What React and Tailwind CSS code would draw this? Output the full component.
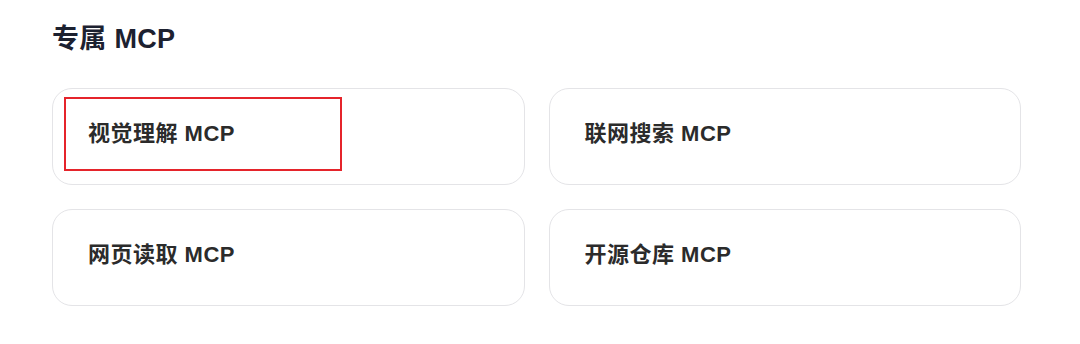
import React from 'react'

const items = ['视觉理解 MCP', '联网搜索 MCP', '网页读取 MCP', '开源仓库 MCP']

export default function App() {
  return (
    <div
      className="w-[1080px] h-[344px] bg-white pl-[52px] pr-[59px] pt-[22px]"
      style={{ fontFamily: '"Liberation Sans", "Noto Sans CJK SC", sans-serif' }}
    >
      <h2 className="text-[27px] leading-[34px] font-bold tracking-[0.3px] text-[#1c2130]">专属 MCP</h2>
      <div className="mt-[32px] grid grid-cols-2 gap-x-[24px] gap-y-[24px]">
        {items.map((label, i) => (
          <div
            key={label}
            className="relative h-[97px] rounded-[20px] border border-[#e4e4e7] bg-white flex items-center pl-[35px] pb-[6px]"
          >
            <span className="text-[22px] font-bold tracking-[0.5px] text-[#2b2b2b]">{label}</span>
            {i === 0 && (
              <div className="absolute left-[11px] top-[8px] w-[278px] h-[74px] border-2 border-[#e5242b]" />
            )}
          </div>
        ))}
      </div>
    </div>
  )
}
